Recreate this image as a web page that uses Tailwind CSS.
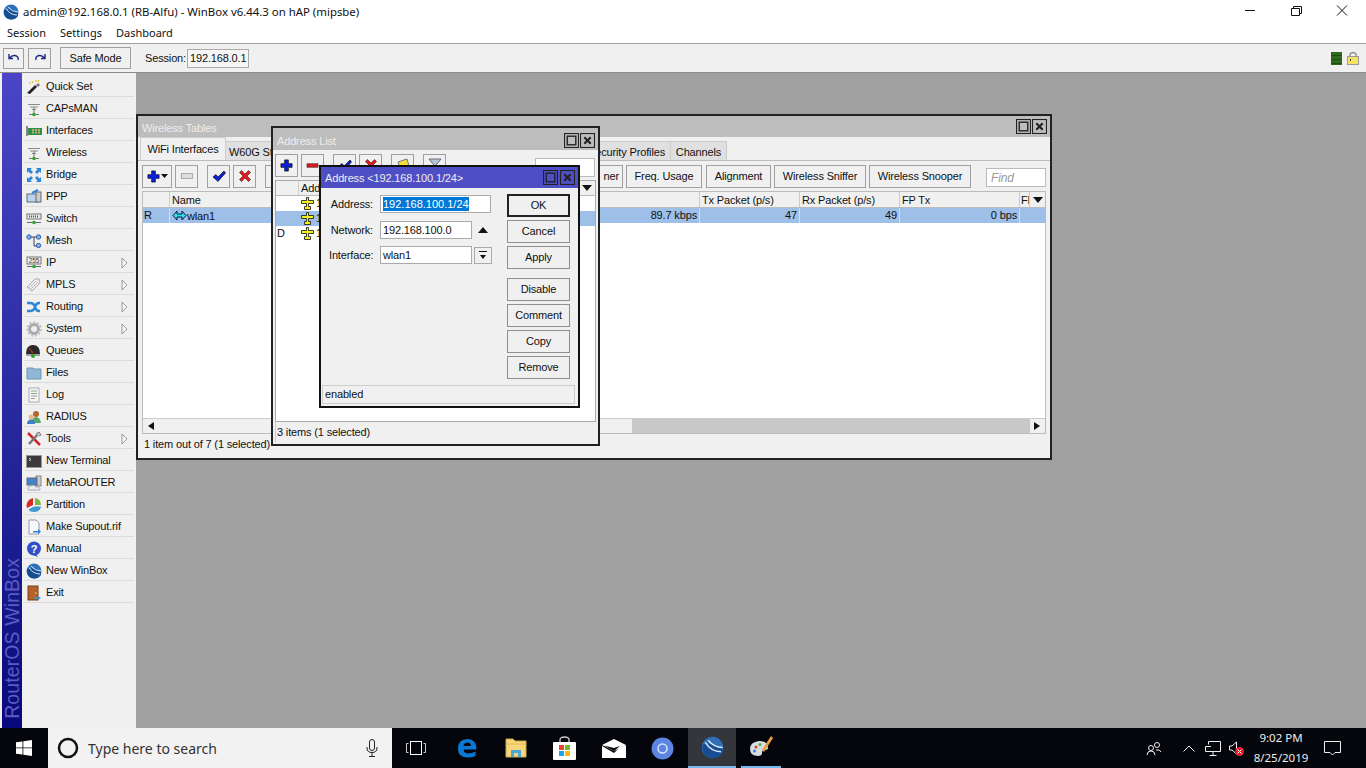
<!DOCTYPE html>
<html lang="en">
<head>
<meta charset="UTF-8">
<title>WinBox</title>
<script src="https://cdn.jsdelivr.net/npm/@tailwindcss/browser@4"></script>
</head>
<body class="w-[1366px] h-[768px] overflow-hidden bg-white font-['Liberation_Sans',sans-serif] text-[11px] tracking-[-.15px] text-[#111]">
<svg class="hidden">
  <symbol id="wave" viewBox="0 0 16 16"><path d="M2 3.500H14M4 6H12M6 8.500H10" stroke="#8a8a8a" fill="none"/><path d="M8 6V13" stroke="#777"/><path d="M3 13.500H13" stroke="#777"/><circle cx="8" cy="13.500" r="1.800" fill="#2fa52f"/></symbol>
  <symbol id="winicon" viewBox="0 0 16 16"><circle cx="8" cy="8" r="7.500" fill="#2e6fb8"/><path d="M1 6Q8 4 15 9V12Q12 16 8 15.500Q2 15 1 9Z" fill="#174d92"/><path d="M3 4.500Q7 11 14 11M5 3Q9 8 15 8" stroke="#dbe9f7" fill="none"/></symbol>
  <symbol id="plus" viewBox="0 0 14 14"><path d="M5 1H9V5H13V9H9V13H5V9H1V5H5Z" fill="#0a1ee0" stroke="#111" stroke-width=".8"/></symbol>
  <symbol id="minus" viewBox="0 0 14 14"><path d="M1 5H13V9H1Z" fill="#e01818" stroke="#333" stroke-width=".6"/></symbol>
  <symbol id="check" viewBox="0 0 14 14"><path d="M1 8L4 5.500L6 8L12 2L13.500 4L6 12.500Z" fill="#0c20d8" stroke="#111" stroke-width=".7"/></symbol>
  <symbol id="cross" viewBox="0 0 14 14"><path d="M1.500 3.500L3.500 1.500L7 5L10.500 1.500L12.500 3.500L9 7L12.500 10.500L10.500 12.500L7 9L3.500 12.500L1.500 10.500L5 7Z" fill="#e81818" stroke="#222" stroke-width=".6"/></symbol>
  <symbol id="addr" viewBox="0 0 13 13"><path d="M5.500 .5H7.500V3.500H12.500V6.500H7.500V9.500H9.500V12.500H3.500V9.500H5.500V6.500H.5V3.500H5.500Z" fill="#f4f01e" stroke="#111" stroke-width=".8"/></symbol>
  <symbol id="maxi" viewBox="0 0 14 14"><rect x=".5" y=".5" width="13" height="13" fill="none" stroke="#222"/><rect x="3" y="3" width="8" height="8" fill="none" stroke="#222" stroke-width="1.300"/></symbol>
  <symbol id="shut" viewBox="0 0 14 14"><rect x=".5" y=".5" width="13" height="13" fill="none" stroke="#222"/><path d="M4 4L10 10M10 4L4 10" stroke="#222" stroke-width="2"/></symbol>
  <symbol id="sub" viewBox="0 0 7 12"><path d="M1 1L6 6L1 11Z" fill="#f4f4f4" stroke="#999"/></symbol>
</svg>

<!-- title bar -->
<div class="flex items-center h-[24px] pl-[3px] font-['Noto_Sans',sans-serif] text-[11.4px] tracking-normal text-[#111]">
  <svg class="w-[16px] h-[16px]"><use href="#winicon"/></svg>
  <span class="ml-[4px]">admin@192.168.0.1 (RB-Alfu) - WinBox v6.44.3 on hAP (mipsbe)</span>
  <div class="ml-auto flex items-center h-[24px]">
    <svg class="w-[46px] h-[24px]" viewBox="0 0 46 24"><path d="M18 10.500H28" stroke="#111"/></svg>
    <svg class="w-[46px] h-[24px]" viewBox="0 0 46 24"><path d="M18.500 8.500H26.500V15.500H18.500ZM20.500 8.500V6.500H28.500V13.500H26.500" fill="none" stroke="#111"/></svg>
    <svg class="w-[46px] h-[24px] mr-[1px]" viewBox="0 0 46 24"><path d="M18 5.500L28 15.500M28 5.500L18 15.500" stroke="#111"/></svg>
  </div>
</div>
<!-- menu bar -->
<div class="flex items-center gap-[14px] h-[20px] pl-[7px] border-b border-[#a0a0a0] font-['Noto_Sans',sans-serif] text-[11px] tracking-normal">
  <span>Session</span><span>Settings</span><span>Dashboard</span>
</div>
<!-- toolbar -->
<div class="flex items-center h-[29px] pl-[3px] bg-[#f0f0f0] border-b border-[#8c8c8c]">
  <button class="flex items-center justify-center w-[21px] h-[21px] border border-[#a0a0a0]"><svg class="w-[12px] h-[12px]" viewBox="0 0 12 12"><path d="M1 2V6.500H5M1.500 6Q4 3 7 3.500Q11 4.500 10 8" fill="none" stroke="#1a2a80" stroke-width="1.400"/></svg></button>
  <button class="flex items-center justify-center ml-[4px] w-[23px] h-[21px] border border-[#a0a0a0]"><svg class="w-[12px] h-[12px]" viewBox="0 0 12 12"><path d="M11 2V6.500H7M10.500 6Q8 3 5 3.500Q1 4.500 2 8" fill="none" stroke="#1a2a80" stroke-width="1.400"/></svg></button>
  <button class="ml-[9px] w-[71px] h-[22px] border border-[#a0a0a0]">Safe Mode</button>
  <span class="ml-[14px] w-[40px]">Session:</span>
  <span class="ml-[2px] px-[2px] leading-[17px] w-[62px] h-[19px] border border-[#aaa] bg-[#f5f5f5]">192.168.0.1</span>
  <div class="ml-auto mr-[7px] flex items-center gap-[5px]">
    <div class="w-[11px] h-[13px] bg-[repeating-linear-gradient(#2f6b1c_0_3px,#1f4f12_3px_4px)]"></div>
    <svg class="w-[12px] h-[14px]" viewBox="0 0 12 14"><path d="M3 6V3Q6 0 9 3V6" fill="none" stroke="#888" stroke-width="1.300"/><rect x=".5" y="5.500" width="11" height="8" fill="#f6e26a" stroke="#999"/><path d="M3.500 8V10" stroke="#333"/></svg>
  </div>
</div>

<!-- main area -->
<div class="flex h-[655px]">
  <!-- side menu -->
  <div class="flex w-[136px] h-full pl-[2px] bg-[#f0f0f0]">
    <div class="flex flex-col justify-end items-center w-[20px] h-full pb-[9px] bg-gradient-to-b from-[#4b45c6] to-[#08087a]">
      <span class="[writing-mode:vertical-rl] rotate-180 text-[19.5px] leading-[20px] text-[#5b5bc0] tracking-[.1px]">RouterOS WinBox</span>
    </div>
    <div class="w-[110px] ml-[2px] pt-[2px]">
      <div class="flex items-center h-[22px] pt-[2px] border-b border-[#dcdcdc]"><svg class="ml-[2px] w-[16px] h-[16px]" viewBox="0 0 16 16"><path d="M1 14L9 6L11 8L4 15Z" fill="#222"/><path d="M10 6L12 8L14 6L12 4Z" fill="#777"/><path d="M6 2L7 4M3 3L5 5M10 1V3M13 1L12 3" stroke="#e5b800"/></svg><span class="ml-[4px]">Quick Set</span></div>
      <div class="flex items-center h-[22px] pt-[2px] border-b border-[#dcdcdc]"><svg class="ml-[2px] w-[16px] h-[16px]"><use href="#wave"/></svg><span class="ml-[4px]">CAPsMAN</span></div>
      <div class="flex items-center h-[22px] pt-[2px] border-b border-[#dcdcdc]"><svg class="ml-[2px] w-[16px] h-[16px]" viewBox="0 0 16 16"><path d="M1 3V13" stroke="#666" stroke-width="1.500"/><rect x="2" y="5" width="14" height="7" fill="#2f8f4a"/><path d="M6 7H15M6 9.500H15" stroke="#b8b070" stroke-dasharray="2 1" stroke-width="2"/></svg><span class="ml-[4px]">Interfaces</span></div>
      <div class="flex items-center h-[22px] pt-[2px] border-b border-[#dcdcdc]"><svg class="ml-[2px] w-[16px] h-[16px]"><use href="#wave"/></svg><span class="ml-[4px]">Wireless</span></div>
      <div class="flex items-center h-[22px] pt-[2px] border-b border-[#dcdcdc]"><svg class="ml-[2px] w-[16px] h-[16px]" viewBox="0 0 16 16"><g fill="#2f86d6"><path d="M1 1H6L4.500 2.500L7 5L5 7L2.500 4.500L1 6Z"/><path d="M15 1V6L13.500 4.500L11 7L9 5L11.500 2.500L10 1Z"/><path d="M1 15V10L2.500 11.500L5 9L7 11L4.500 13.500L6 15Z"/><path d="M15 15H10L11.500 13.500L9 11L11 9L13.500 11.500L15 10Z"/></g></svg><span class="ml-[4px]">Bridge</span></div>
      <div class="flex items-center h-[22px] pt-[2px] border-b border-[#dcdcdc]"><svg class="ml-[2px] w-[16px] h-[16px]" viewBox="0 0 16 16"><rect x="1" y="5" width="11" height="8" fill="#b8d4ee" stroke="#667"/><rect x="10" y="3" width="5" height="10" fill="#ccc" stroke="#667"/><path d="M6 4L12 1" stroke="#2f86d6" stroke-width="2"/></svg><span class="ml-[4px]">PPP</span></div>
      <div class="flex items-center h-[22px] pt-[2px] border-b border-[#dcdcdc]"><svg class="ml-[2px] w-[16px] h-[16px]" viewBox="0 0 16 16"><rect x="1" y="3" width="14" height="5" fill="#e8e8e8" stroke="#777"/><path d="M3 5.500H13" stroke="#555" stroke-dasharray="1 1" stroke-width="2"/><path d="M1 11.500H15" stroke="#666"/><circle cx="8" cy="11.500" r="1.800" fill="#2fa52f"/></svg><span class="ml-[4px]">Switch</span></div>
      <div class="flex items-center h-[22px] pt-[2px] border-b border-[#dcdcdc]"><svg class="ml-[2px] w-[16px] h-[16px]" viewBox="0 0 16 16"><path d="M3 4H8V13H12M8 4H12" fill="none" stroke="#444"/><circle cx="3" cy="4" r="2.200" fill="#8ab0e4" stroke="#2f5fb0"/><circle cx="12.500" cy="4" r="2.200" fill="#8ab0e4" stroke="#2f5fb0"/><circle cx="12.500" cy="12.500" r="2.200" fill="#8ab0e4" stroke="#2f5fb0"/></svg><span class="ml-[4px]">Mesh</span></div>
      <div class="flex items-center h-[22px] pt-[2px] border-b border-[#dcdcdc]"><svg class="ml-[2px] w-[16px] h-[16px]" viewBox="0 0 16 16"><rect x="1" y="2" width="14" height="7" fill="#eee" stroke="#777"/><text x="8" y="8" font-size="6.500" text-anchor="middle" fill="#444" font-family="Liberation Sans">255</text><path d="M1 11.500H15" stroke="#666"/><circle cx="8" cy="11.500" r="1.800" fill="#2fa52f"/></svg><span class="ml-[4px]">IP</span><svg class="ml-auto mr-[6px] w-[7px] h-[12px]"><use href="#sub"/></svg></div>
      <div class="flex items-center h-[22px] pt-[2px] border-b border-[#dcdcdc]"><svg class="ml-[2px] w-[16px] h-[16px]" viewBox="0 0 16 16"><path d="M1 10L9 2H13L14 6L6 14Z" fill="#eee" stroke="#aaa"/><path d="M3 11L10 4M5 12L12 5" stroke="#bbb"/></svg><span class="ml-[4px]">MPLS</span><svg class="ml-auto mr-[6px] w-[7px] h-[12px]"><use href="#sub"/></svg></div>
      <div class="flex items-center h-[22px] pt-[2px] border-b border-[#dcdcdc]"><svg class="ml-[2px] w-[16px] h-[16px]" viewBox="0 0 16 16"><path d="M1 4H4Q8 4 9 8T13 12H14M1 12H4Q8 12 9 8T13 4H14" fill="none" stroke="#2f86d6" stroke-width="2.500"/></svg><span class="ml-[4px]">Routing</span><svg class="ml-auto mr-[6px] w-[7px] h-[12px]"><use href="#sub"/></svg></div>
      <div class="flex items-center h-[22px] pt-[2px] border-b border-[#dcdcdc]"><svg class="ml-[2px] w-[16px] h-[16px]" viewBox="0 0 16 16"><circle cx="8" cy="8" r="4.500" fill="none" stroke="#aaa" stroke-width="3"/><circle cx="8" cy="8" r="7" fill="none" stroke="#bbb" stroke-width="1.500" stroke-dasharray="2 2"/></svg><span class="ml-[4px]">System</span><svg class="ml-auto mr-[6px] w-[7px] h-[12px]"><use href="#sub"/></svg></div>
      <div class="flex items-center h-[22px] pt-[2px] border-b border-[#dcdcdc]"><svg class="ml-[1px] w-[16px] h-[16px]" viewBox="0 0 16 16"><path d="M1 11Q1 2 8 2T15 11Z" fill="#2a2a2a"/><path d="M4 5L8 10" stroke="#e02020" stroke-width="1.200"/><path d="M1 12H15" stroke="#555"/><circle cx="8" cy="13" r="2" fill="#2fa52f"/></svg><span class="ml-[5px]">Queues</span></div>
      <div class="flex items-center h-[22px] pt-[2px] border-b border-[#dcdcdc]"><svg class="ml-[2px] w-[16px] h-[16px]" viewBox="0 0 16 16"><path d="M1 3H7L8 4H15V14H1Z" fill="#8fb8d8" stroke="#6d93b0"/></svg><span class="ml-[4px]">Files</span></div>
      <div class="flex items-center h-[22px] pt-[2px] border-b border-[#dcdcdc]"><svg class="ml-[2px] w-[16px] h-[16px]" viewBox="0 0 16 16"><rect x="3" y="1" width="10" height="14" fill="#f4f8ee" stroke="#aab"/><path d="M5 4H11M5 6.500H11M5 9H11M5 11.500H9" stroke="#999"/></svg><span class="ml-[4px]">Log</span></div>
      <div class="flex items-center h-[22px] pt-[2px] border-b border-[#dcdcdc]"><svg class="ml-[2px] w-[16px] h-[16px]" viewBox="0 0 16 16"><circle cx="10" cy="5" r="3" fill="#b5642a"/><path d="M6 14Q6 8 10 8T15 14Z" fill="#55a868"/><circle cx="5" cy="8" r="2.500" fill="#e8b88a"/><path d="M1 15Q1 10.500 5 10.500T9 15Z" fill="#3f7fc4"/></svg><span class="ml-[4px]">RADIUS</span></div>
      <div class="flex items-center h-[22px] pt-[2px] border-b border-[#dcdcdc]"><svg class="ml-[2px] w-[16px] h-[16px]" viewBox="0 0 16 16"><path d="M2 2L14 14" stroke="#d02828" stroke-width="2.500"/><path d="M13 2L3 13" stroke="#777" stroke-width="2.500"/><path d="M10 3L13 1L15 4L13 5" fill="#ccc" stroke="#777"/></svg><span class="ml-[4px]">Tools</span><svg class="ml-auto mr-[6px] w-[7px] h-[12px]"><use href="#sub"/></svg></div>
      <div class="flex items-center h-[22px] pt-[2px] border-b border-[#dcdcdc]"><svg class="ml-[2px] w-[16px] h-[16px]" viewBox="0 0 16 16"><rect x=".5" y="2.500" width="15" height="12" fill="#3a3a3a" stroke="#999"/><path d="M3 5L5 6.500L3 8" fill="none" stroke="#ddd"/></svg><span class="ml-[4px]">New Terminal</span></div>
      <div class="flex items-center h-[22px] pt-[2px] border-b border-[#dcdcdc]"><svg class="ml-[2px] w-[16px] h-[16px]" viewBox="0 0 16 16"><rect x="10" y="1" width="5" height="10" fill="#ccc" stroke="#888"/><rect x="1" y="3" width="10" height="7" fill="#3f86cc" stroke="#667"/><path d="M2 14Q1 11 5 11Q8 9 10 12Q14 11 14 15H2Z" fill="#e8eef4" stroke="#aab"/></svg><span class="ml-[4px]">MetaROUTER</span></div>
      <div class="flex items-center h-[22px] pt-[2px] border-b border-[#dcdcdc]"><svg class="ml-[2px] w-[16px] h-[16px]" viewBox="0 0 16 16"><path d="M7 1V8L1 11Q-1 4 7 1Z" fill="#d82828"/><path d="M9 1Q15 2 15 8H9Z" fill="#7cb840"/><path d="M15 9.500Q14 15 8 15Q4 15 2.500 12.500L8 9.500Z" fill="#3f9ad0"/></svg><span class="ml-[4px]">Partition</span></div>
      <div class="flex items-center h-[22px] pt-[2px] border-b border-[#dcdcdc]"><svg class="ml-[2px] w-[16px] h-[16px]" viewBox="0 0 16 16"><path d="M3 1H10L13 4V15H3Z" fill="#f6f8fc" stroke="#99a"/><path d="M7 12H12V10L15 12.500L12 15V13.500H7Z" fill="#2f86d6"/></svg><span class="ml-[4px]">Make Supout.rif</span></div>
      <div class="flex items-center h-[22px] pt-[2px] border-b border-[#dcdcdc]"><svg class="ml-[2px] w-[16px] h-[16px]" viewBox="0 0 16 16"><circle cx="8" cy="7.500" r="7" fill="#2f50c8"/><path d="M10 13L12 16L7 14Z" fill="#2f50c8"/><text x="8" y="11.500" font-size="11" font-weight="bold" text-anchor="middle" fill="#fff" font-family="Liberation Sans">?</text></svg><span class="ml-[4px]">Manual</span></div>
      <div class="flex items-center h-[22px] pt-[2px] border-b border-[#dcdcdc]"><svg class="ml-[2px] w-[16px] h-[16px]"><use href="#winicon"/></svg><span class="ml-[4px]">New WinBox</span></div>
      <div class="flex items-center h-[22px] pt-[2px] border-b border-[#dcdcdc]"><svg class="ml-[2px] w-[16px] h-[16px]" viewBox="0 0 16 16"><rect x="2" y="1" width="10" height="14" fill="#b5622a" stroke="#7a3d14"/><circle cx="10" cy="8" r=".8" fill="#fd6"/><path d="M8 12.500H12V11L15 13L12 15V14H8Z" fill="#3f9ad0"/></svg><span class="ml-[4px]">Exit</span></div>
    </div>
  </div>

  <!-- desktop with child windows -->
  <div class="relative flex-1 bg-[#a0a0a0]">

    <!-- Wireless Tables -->
    <div class="absolute left-0 top-[41px] w-[916px] h-[346px] border-2 border-[#222] bg-[#f0f0f0]">
      <div class="flex items-center h-[21px] pl-[4px] bg-[#bdbdbd] text-[#eee]">
        <span class="pt-[3px]">Wireless Tables</span>
        <svg class="ml-auto w-[15px] h-[15px]"><use href="#maxi"/></svg>
        <svg class="ml-[1px] mr-[3px] w-[15px] h-[15px]"><use href="#shut"/></svg>
      </div>
      <div class="flex items-end h-[24px] pl-[2px] border-b border-[#bbb]">
        <div class="flex items-center justify-center w-[86px] h-[23px] bg-[#f0f0f0] border-t border-r border-l border-[#ccc]">WiFi Interfaces</div>
        <div class="w-[60px] h-[19px] pl-[3px] pt-[2px] leading-[17px] whitespace-nowrap overflow-hidden bg-[#e0e0e0] border-t border-r border-[#ccc]">W60G Station</div>
        <div class="w-[293px] h-[19px] bg-[#e0e0e0]"></div>
        <div class="flex items-center justify-end w-[92px] h-[19px] pr-[5px] pt-[2px] bg-[#e0e0e0] border-t border-r border-[#ccc]">Security Profiles</div>
        <div class="flex items-center justify-center w-[56px] h-[19px] pt-[2px] bg-[#e0e0e0] border-t border-r border-[#ccc]">Channels</div>
      </div>
      <div class="flex items-center h-[30px] pl-[4px]">
        <button class="flex items-center justify-center w-[30px] h-[23px] border border-[#a0a0a0]"><svg class="w-[13px] h-[13px]"><use href="#plus"/></svg><svg class="ml-[1px] w-[7px] h-[4px]" viewBox="0 0 7 4"><path d="M0 0H7L3.500 4Z" fill="#111"/></svg></button>
        <button class="flex items-center justify-center ml-[3px] w-[23px] h-[23px] border border-[#a0a0a0]"><svg class="w-[12px] h-[6px]" viewBox="0 0 12 6"><rect x=".5" y=".5" width="11" height="5" fill="#ddd" stroke="#aaa"/></svg></button>
        <button class="flex items-center justify-center ml-[9px] w-[23px] h-[23px] border border-[#a0a0a0]"><svg class="w-[14px] h-[14px]"><use href="#check"/></svg></button>
        <button class="flex items-center justify-center ml-[3px] w-[23px] h-[23px] border border-[#a0a0a0]"><svg class="w-[14px] h-[14px]"><use href="#cross"/></svg></button>
        <div class="ml-[9px] w-[23px] h-[23px] border border-[#a0a0a0]"></div>
        <button class="ml-[311px] w-[24px] h-[23px] pt-[1px] border border-l-0 border-[#a0a0a0] text-right pr-[3px]">ner</button>
        <button class="ml-[3px] w-[76px] h-[23px] pt-[1px] border border-[#a0a0a0]">Freq. Usage</button>
        <button class="ml-[4px] w-[65px] h-[23px] pt-[1px] border border-[#a0a0a0]">Alignment</button>
        <button class="ml-[3px] w-[92px] h-[23px] pt-[1px] border border-[#a0a0a0]">Wireless Sniffer</button>
        <button class="ml-[3px] w-[102px] h-[23px] pt-[1px] border border-[#a0a0a0]">Wireless Snooper</button>
        <div class="ml-[15px] w-[60px] h-[19px] mt-[3px] pl-[4px] leading-[18px] border border-[#bbb] bg-white italic text-[#999] text-[12px]">Find</div>
      </div>
      <div class="flex flex-col mx-[4px] h-[243px] bg-white border border-[#bbb]">
        <div class="flex h-[16px] leading-[16px] bg-[#f0f0f0] border-b border-[#bbb]">
          <div class="w-[27px] border-r border-[#ccc]"></div>
          <div class="flex w-[129px] pl-[2px] border-r border-[#ccc]"><span>Name</span><span class="ml-auto mr-[6px] text-[#aaa] text-[8px]">▵</span></div>
          <div class="w-[401px] border-r border-[#ccc]"></div>
          <div class="w-[100px] pl-[2px] border-r border-[#ccc]">Tx Packet (p/s)</div>
          <div class="w-[100px] pl-[2px] border-r border-[#ccc]">Rx Packet (p/s)</div>
          <div class="w-[120px] pl-[2px] border-r border-[#ccc]">FP Tx</div>
          <div class="w-[10px] pl-[1px] overflow-hidden border-r border-[#ccc]">FP</div>
          <div class="flex items-center justify-center flex-1"><svg class="w-[10px] h-[6px]" viewBox="0 0 10 6"><path d="M0 0H10L5 6Z" fill="#111"/></svg></div>
        </div>
        <div class="flex h-[15px] leading-[14px] bg-[#9dbfe8]">
          <div class="w-[27px] pl-[1px] border-r border-[#cfdff4]">R</div>
          <div class="flex items-center w-[129px] pl-[2px] border-r border-[#cfdff4]"><svg class="w-[15px] h-[11px]" viewBox="0 0 15 11"><path d="M1 5.500L5 1V4H10V1L14 5.500L10 10V7H5V10Z" fill="#2fe0e0" stroke="#115"/></svg><span>wlan1</span></div>
          <div class="w-[401px] pr-[2px] text-right border-r border-[#cfdff4]">89.7 kbps</div>
          <div class="w-[100px] pr-[2px] text-right border-r border-[#cfdff4]">47</div>
          <div class="w-[100px] pr-[2px] text-right border-r border-[#cfdff4]">49</div>
          <div class="w-[120px] pr-[2px] text-right border-r border-[#cfdff4]">0 bps</div>
        </div>
        <div class="flex-1"></div>
        <div class="flex items-center h-[15px] bg-[#f0f0f0] border-t border-[#ccc]">
          <svg class="ml-[4px] w-[7px] h-[8px]" viewBox="0 0 7 8"><path d="M7 0V8L1 4Z" fill="#111"/></svg>
          <div class="ml-auto w-[398px] h-full bg-[#c8c8c8]"></div>
          <svg class="mx-[4px] w-[7px] h-[8px]" viewBox="0 0 7 8"><path d="M0 0V8L6 4Z" fill="#111"/></svg>
        </div>
      </div>
      <div class="flex items-center h-[20px] pl-[6px]">1 item out of 7 (1 selected)</div>
    </div>

    <!-- Address List -->
    <div class="absolute left-[135px] top-[53px] w-[329px] h-[320px] border-2 border-[#222] bg-[#f0f0f0]">
      <div class="flex items-center h-[22px] pl-[4px] bg-[#bdbdbd] text-[#eee]">
        <span class="pt-[5px]">Address List</span>
        <svg class="ml-auto mt-[3px] w-[15px] h-[15px]"><use href="#maxi"/></svg>
        <svg class="ml-[1px] mt-[3px] mr-[3px] w-[15px] h-[15px]"><use href="#shut"/></svg>
      </div>
      <div class="flex items-center h-[30px] pl-[2px]">
        <button class="flex items-center justify-center w-[23px] h-[23px] border border-[#a0a0a0]"><svg class="w-[13px] h-[13px]"><use href="#plus"/></svg></button>
        <button class="flex items-center justify-center ml-[3px] w-[23px] h-[23px] border border-[#a0a0a0]"><svg class="w-[13px] h-[13px]"><use href="#minus"/></svg></button>
        <button class="flex items-center justify-center ml-[9px] w-[23px] h-[23px] border border-[#a0a0a0]"><svg class="w-[14px] h-[14px]"><use href="#check"/></svg></button>
        <button class="flex items-center justify-center ml-[3px] w-[23px] h-[23px] border border-[#a0a0a0]"><svg class="w-[14px] h-[14px]"><use href="#cross"/></svg></button>
        <button class="flex items-center justify-center ml-[9px] w-[23px] h-[23px] border border-[#a0a0a0]"><svg class="w-[14px] h-[14px]" viewBox="0 0 14 14"><path d="M2 4L11 1L13 8L4 11Z" fill="#f2df3c" stroke="#777"/></svg></button>
        <button class="flex items-center justify-center ml-[9px] w-[23px] h-[23px] border border-[#a0a0a0]"><svg class="w-[14px] h-[14px]" viewBox="0 0 14 14"><path d="M1 1H13L8 7V13L6 11V7Z" fill="#b8c4d4" stroke="#667"/></svg></button>
        <div class="ml-[89px] mt-[4px] w-[60px] h-[19px] border border-[#bbb] bg-white"></div>
      </div>
      <div class="flex flex-col mx-[2px] h-[242px] bg-white border border-[#aaa]">
        <div class="flex h-[15px] leading-[14px] bg-[#f0f0f0] border-b border-[#bbb]">
          <div class="w-[23px] border-r border-[#ccc]"></div>
          <div class="flex-1 pl-[2px]">Address</div>
          <div class="flex items-center mr-[3px]"><svg class="w-[10px] h-[6px]" viewBox="0 0 10 6"><path d="M0 0H10L5 6Z" fill="#111"/></svg></div>
        </div>
        <div class="flex items-center h-[15px]"><div class="w-[23px]"></div><svg class="ml-[2px] w-[13px] h-[13px]"><use href="#addr"/></svg><span class="ml-[2px]">192.168.100.1/24</span></div>
        <div class="flex items-center h-[15px] bg-[#9dbfe8]"><div class="w-[23px]"></div><svg class="ml-[2px] w-[13px] h-[13px]"><use href="#addr"/></svg><span class="ml-[2px]">192.168.100.1/24</span></div>
        <div class="flex items-center h-[15px]"><div class="w-[23px] pl-[1px]">D</div><svg class="ml-[2px] w-[13px] h-[13px]"><use href="#addr"/></svg><span class="ml-[2px]">192.168.0.1/24</span></div>
      </div>
      <div class="flex items-center h-[20px] ml-[2px] pl-[1px] border-l border-[#ccc]">3 items (1 selected)</div>
    </div>

    <!-- Address dialog -->
    <div class="absolute left-[183px] top-[92px] w-[261px] h-[243px] border-2 border-[#111] bg-[#f0f0f0]">
      <div class="flex items-center h-[21px] pl-[4px] bg-[#4e4fc4] text-[#eee]">
        <span class="pt-[2px]">Address &lt;192.168.100.1/24&gt;</span>
        <svg class="ml-auto w-[15px] h-[15px]"><use href="#maxi"/></svg>
        <svg class="ml-[2px] mr-[3px] w-[15px] h-[15px]"><use href="#shut"/></svg>
      </div>
      <div class="flex pl-[8px] pt-[7px] h-[197px]">
        <div class="w-[172px]">
          <div class="flex items-center h-[18px]">
            <span class="w-[44px] text-right">Address:</span>
            <div class="ml-[7px] w-[111px] h-[18px] pl-[2px] pt-[1px] leading-[14px] bg-white border border-[#aaa]"><span class="inline-block bg-[#0078d7] text-white tracking-normal">192.168.100.1/24</span></div>
          </div>
          <div class="flex items-center h-[18px] mt-[8px]">
            <span class="w-[44px] text-right">Network:</span>
            <div class="ml-[7px] w-[92px] h-[18px] pl-[2px] leading-[16px] bg-white border border-[#aaa]">192.168.100.0</div>
            <svg class="ml-[6px] w-[10px] h-[6px]" viewBox="0 0 10 6"><path d="M0 6H10L5 0Z" fill="#111"/></svg>
          </div>
          <div class="flex items-center h-[18px] mt-[7px]">
            <span class="w-[44px] text-right">Interface:</span>
            <div class="ml-[7px] w-[92px] h-[18px] pl-[2px] leading-[16px] bg-white border border-[#aaa]">wlan1</div>
            <div class="flex items-center justify-center ml-[2px] w-[18px] h-[17px] border border-[#aaa]"><svg class="w-[8px] h-[9px]" viewBox="0 0 8 9"><path d="M0 0H8V1H0ZM1 4H7L4 8Z" fill="#111"/></svg></div>
          </div>
        </div>
        <div class="flex flex-col ml-[6px] -mt-[1px] w-[63px]">
          <button class="w-full h-[23px] border-2 border-[#222]">OK</button>
          <button class="w-full h-[23px] mt-[3px] border border-[#8f8f8f]">Cancel</button>
          <button class="w-full h-[23px] mt-[3px] border border-[#8f8f8f]">Apply</button>
          <button class="w-full h-[23px] mt-[9px] border border-[#8f8f8f]">Disable</button>
          <button class="w-full h-[23px] mt-[3px] border border-[#8f8f8f]">Comment</button>
          <button class="w-full h-[23px] mt-[3px] border border-[#8f8f8f]">Copy</button>
          <button class="w-full h-[23px] mt-[3px] border border-[#8f8f8f]">Remove</button>
        </div>
      </div>
      <div class="mx-[1px] w-[253px] h-[19px] pl-[2px] leading-[17px] border border-[#ccc]">enabled</div>
    </div>
  </div>
</div>

<!-- windows taskbar -->
<div class="flex items-center h-[40px] bg-[#05060b]">
  <div class="flex items-center justify-center w-[48px] h-full"><svg class="w-[16px] h-[16px]" viewBox="0 0 16 16"><path d="M0 2.300L6.500 1.400V7.500H0ZM7.300 1.300L16 0V7.500H7.300ZM0 8.300H6.500V14.600L0 13.700ZM7.300 8.300H16V16L7.300 14.700Z" fill="#fff"/></svg></div>
  <div class="flex items-center w-[344px] h-full pl-[9px] bg-[#f2f2f2] font-['Noto_Sans',sans-serif] text-[14px] tracking-normal text-[#333]">
    <svg class="w-[22px] h-[22px]" viewBox="0 0 22 22"><circle cx="11" cy="11" r="9" fill="none" stroke="#111" stroke-width="2.500"/></svg>
    <span class="ml-[9px]">Type here to search</span>
    <svg class="ml-auto mr-[13px] w-[14px] h-[18px]" viewBox="0 0 14 18"><rect x="4.500" y=".5" width="5" height="11" rx="2.500" fill="none" stroke="#222"/><path d="M2 8V9Q2 13.500 7 13.500T12 9V8M7 13.500V17M4 17.500H10" fill="none" stroke="#222"/></svg>
  </div>
  <div class="flex items-center justify-center w-[48px] h-full"><svg class="w-[20px] h-[14px]" viewBox="0 0 20 14"><rect x="4.500" y=".5" width="11" height="13" fill="none" stroke="#fff"/><path d="M2.500 2.500H.5V11.500H2.500M17.500 2.500H19.500V11.500H17.500" fill="none" stroke="#ccc"/></svg></div>
  <div class="flex items-center justify-center ml-[2px] w-[49px] h-full"><svg class="w-[20px] h-[20px]" viewBox="0 0 20 20"><path d="M1 11Q1 1 10.500 1Q19.500 1 19.500 11.500H6.500Q7 15.500 11 15.500Q15 15.500 18.500 13.500V18Q15 19.500 11 19.500Q1 19.500 1 11ZM6.500 8H14Q14 4.500 10.500 4.500Q7 4.500 6.500 8Z" fill="#0a78d4"/></svg></div>
  <div class="flex items-center justify-center w-[49px] h-full"><svg class="w-[22px] h-[20px]" viewBox="0 0 22 20"><path d="M1 1H8L10 3H21V19H1Z" fill="#f5d67b" stroke="#c9a84a"/><path d="M1 6H21" stroke="#e6bd50"/><path d="M6 19V12H16V19H13V15H9V19Z" fill="#4aa8d8"/></svg></div>
  <div class="flex items-center justify-center w-[49px] h-full"><svg class="w-[23px] h-[24px]" viewBox="0 0 23 24"><path d="M7 7V4Q7 1 11.500 1T16 4V7" fill="none" stroke="#ccc" stroke-width="1.300"/><rect x="0" y="6" width="23" height="18" rx="1" fill="#fff"/><rect x="6" y="9" width="5" height="5" fill="#e8472a"/><rect x="12" y="9" width="5" height="5" fill="#76b82a"/><rect x="6" y="15" width="5" height="5" fill="#1ea5e8"/><rect x="12" y="15" width="5" height="5" fill="#fcb813"/></svg></div>
  <div class="flex items-center justify-center w-[49px] h-full"><svg class="w-[24px] h-[19px]" viewBox="0 0 24 19"><path d="M0 6L12 0L24 6L12 12Z" fill="#fff"/><path d="M0 7L12 14L17 9L24 6V19H0Z" fill="#fff"/><path d="M2 6.500L12 12L18 7L12 9Z" fill="#05060b"/></svg></div>
  <div class="flex items-center justify-center w-[49px] h-full"><svg class="w-[23px] h-[23px]" viewBox="0 0 23 23"><circle cx="11.500" cy="11.500" r="11" fill="#5b85e0"/><circle cx="11.500" cy="11.500" r="4.500" fill="none" stroke="#d8e4fa" stroke-width="1.500"/></svg></div>
  <div class="flex items-center justify-center ml-[1px] w-[48px] h-full bg-[#33363b] border-b-[2px] border-[#76b9ed]"><svg class="w-[23px] h-[23px]"><use href="#winicon"/></svg></div>
  <div class="flex items-center justify-center ml-[5px] w-[40px] h-full border-b-[2px] border-[#76b9ed]"><svg class="w-[25px] h-[24px]" viewBox="0 0 25 24"><path d="M1 14Q1 7 10 6Q19 6 19 13Q19 15 15 15Q13 15 13 18Q13 21 9 21Q1 21 1 14Z" fill="#d8dde2"/><circle cx="7" cy="12" r="1.500" fill="#d8432a"/><circle cx="11" cy="9.500" r="1.500" fill="#4ab04a"/><circle cx="5.500" cy="16" r="1.500" fill="#3a86d8"/><path d="M22 1L24 3L15 17L13 15Z" fill="#e8a040"/></svg></div>
  <div class="ml-auto flex items-center h-full text-[#eee] font-['Noto_Sans',sans-serif] text-[11.5px] tracking-normal">
    <svg class="w-[16px] h-[15px]" viewBox="0 0 16 15"><circle cx="11" cy="4" r="2.500" fill="none" stroke="#eee"/><circle cx="5" cy="7" r="2.500" fill="none" stroke="#eee"/><path d="M1 14Q1 10 5 10T9 14M10 9Q14 8 15 11" fill="none" stroke="#eee"/></svg>
    <svg class="ml-[21px] w-[12px] h-[7px]" viewBox="0 0 12 7"><path d="M.5 6.500L6 1L11.500 6.500" fill="none" stroke="#eee"/></svg>
    <svg class="ml-[10px] w-[16px] h-[15px]" viewBox="0 0 16 15"><path d="M3.500 3.500V.5H15.500V10.500H.5V5.500H6M8 10.500V14M4.500 14.500H11.500" fill="none" stroke="#eee"/></svg>
    <div class="relative ml-[8px] w-[16px] h-[14px]">
      <svg class="w-[8px] h-[14px]" viewBox="0 0 8 14"><path d="M.5 5H3L7.500 1V13L3 9H.5Z" fill="none" stroke="#eee"/></svg>
      <svg class="absolute left-[6px] top-[6px] w-[9px] h-[9px]" viewBox="0 0 9 9"><circle cx="4.500" cy="4.500" r="4.500" fill="#e02030"/><path d="M2.500 2.500L6.500 6.500M6.500 2.500L2.500 6.500" stroke="#fff"/></svg>
    </div>
    <div class="flex flex-col items-center ml-[6px] w-[60px] leading-[20px]"><span>9:02 PM</span><span>8/25/2019</span></div>
    <svg class="ml-[13px] mr-[25px] w-[17px] h-[15px]" viewBox="0 0 17 15"><path d="M.5 .5H16.500V11.500H11L8.500 14L6 11.500H.5Z" fill="none" stroke="#eee"/></svg>
  </div>
</div>
</body>
</html>
